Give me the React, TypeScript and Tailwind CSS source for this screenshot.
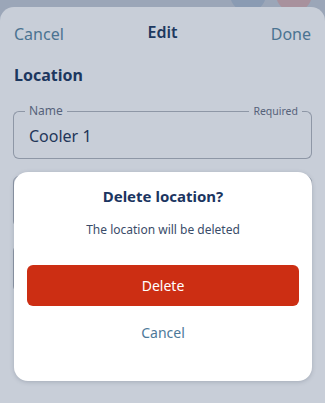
import React from 'react'

// Edit location sheet, dimmed behind a delete confirmation dialog
export default function App() {
  return (
    <div
      className="relative w-[325px] h-[403px] overflow-hidden bg-[#9ba6b8] flex flex-col"
      style={{ fontFamily: '"Noto Sans", "Open Sans", sans-serif' }}
    >
      {/* page behind the sheet */}
      <div className="h-[7px] shrink-0 flex justify-end gap-[10px] pr-[13px]">
        <div className="w-[36px] h-[36px] -mt-[24px] rounded-full bg-[#8a9bb3]" />
        <div className="w-[36px] h-[36px] -mt-[24px] rounded-full bg-[#a8919d]" />
      </div>

      {/* the sheet */}
      <div className="flex-1 rounded-t-[14px] bg-[#c8ced8] px-[13px]">
        <div className="flex items-center justify-between h-[48px] pt-[2px] px-[1px]">
          <span className="text-[16px] text-[#4b7391] w-[60px] mt-[3px]">Cancel</span>
          <span className="text-[16px] font-semibold text-[#1d3960]">Edit</span>
          <span className="text-[16px] text-[#4b7391] w-[60px] text-right mt-[3px]">Done</span>
        </div>

        <h2 className="mt-[8px] px-[1px] text-[16px] font-bold text-[#1c375f] leading-[24px]">Location</h2>

        {/* outlined field with labels sitting on the top border */}
        <div className="mt-[24px]">
          <div className="flex items-start h-[10px]">
            <div className="w-[12px] h-[10px] border-l border-t border-[#8e97a6] rounded-tl-[6px]" />
            <span className="-mt-[7px] px-[4px] text-[12px] leading-[14px] text-[#56627a]">Name</span>
            <div className="flex-1 border-t border-[#8e97a6]" />
            <span className="-mt-[7px] px-[4px] text-[10.5px] leading-[14px] text-[#56627a]">Required</span>
            <div className="w-[10px] h-[10px] border-r border-t border-[#8e97a6] rounded-tr-[6px]" />
          </div>
          <div className="h-[38px] border-x border-b border-[#8e97a6] rounded-b-[6px] px-[15px] pt-[4px]">
            <div className="text-[16px] text-[#1f3659] leading-[22px]">Cooler 1</div>
          </div>
        </div>

        <div className="mt-[17px] h-[51px] border border-[#8e97a6] rounded-[6px]" />
        <div className="mt-[18px] h-[47px] border border-[#8e97a6] rounded-[6px]" />
      </div>

      {/* confirmation dialog */}
      <div className="absolute left-[14px] top-[172px] w-[298px] h-[209px] rounded-[14px] bg-white shadow-[0_1px_4px_rgba(60,70,90,0.25)] flex flex-col items-center px-[13px]">
        <h3 className="mt-[13px] text-[15px] font-bold text-[#1b3561] leading-[22px]">Delete location?</h3>
        <p className="mt-[14px] text-[12px] text-[#3a4c69] leading-[18px]">The location will be deleted</p>
        <button className="mt-[26px] w-full h-[41px] rounded-[6px] bg-[#cc2e13] text-white text-[14px]">
          Delete
        </button>
        <button className="mt-[16px] text-[14px] text-[#4d7999] leading-[22px]">Cancel</button>
      </div>
    </div>
  )
}
